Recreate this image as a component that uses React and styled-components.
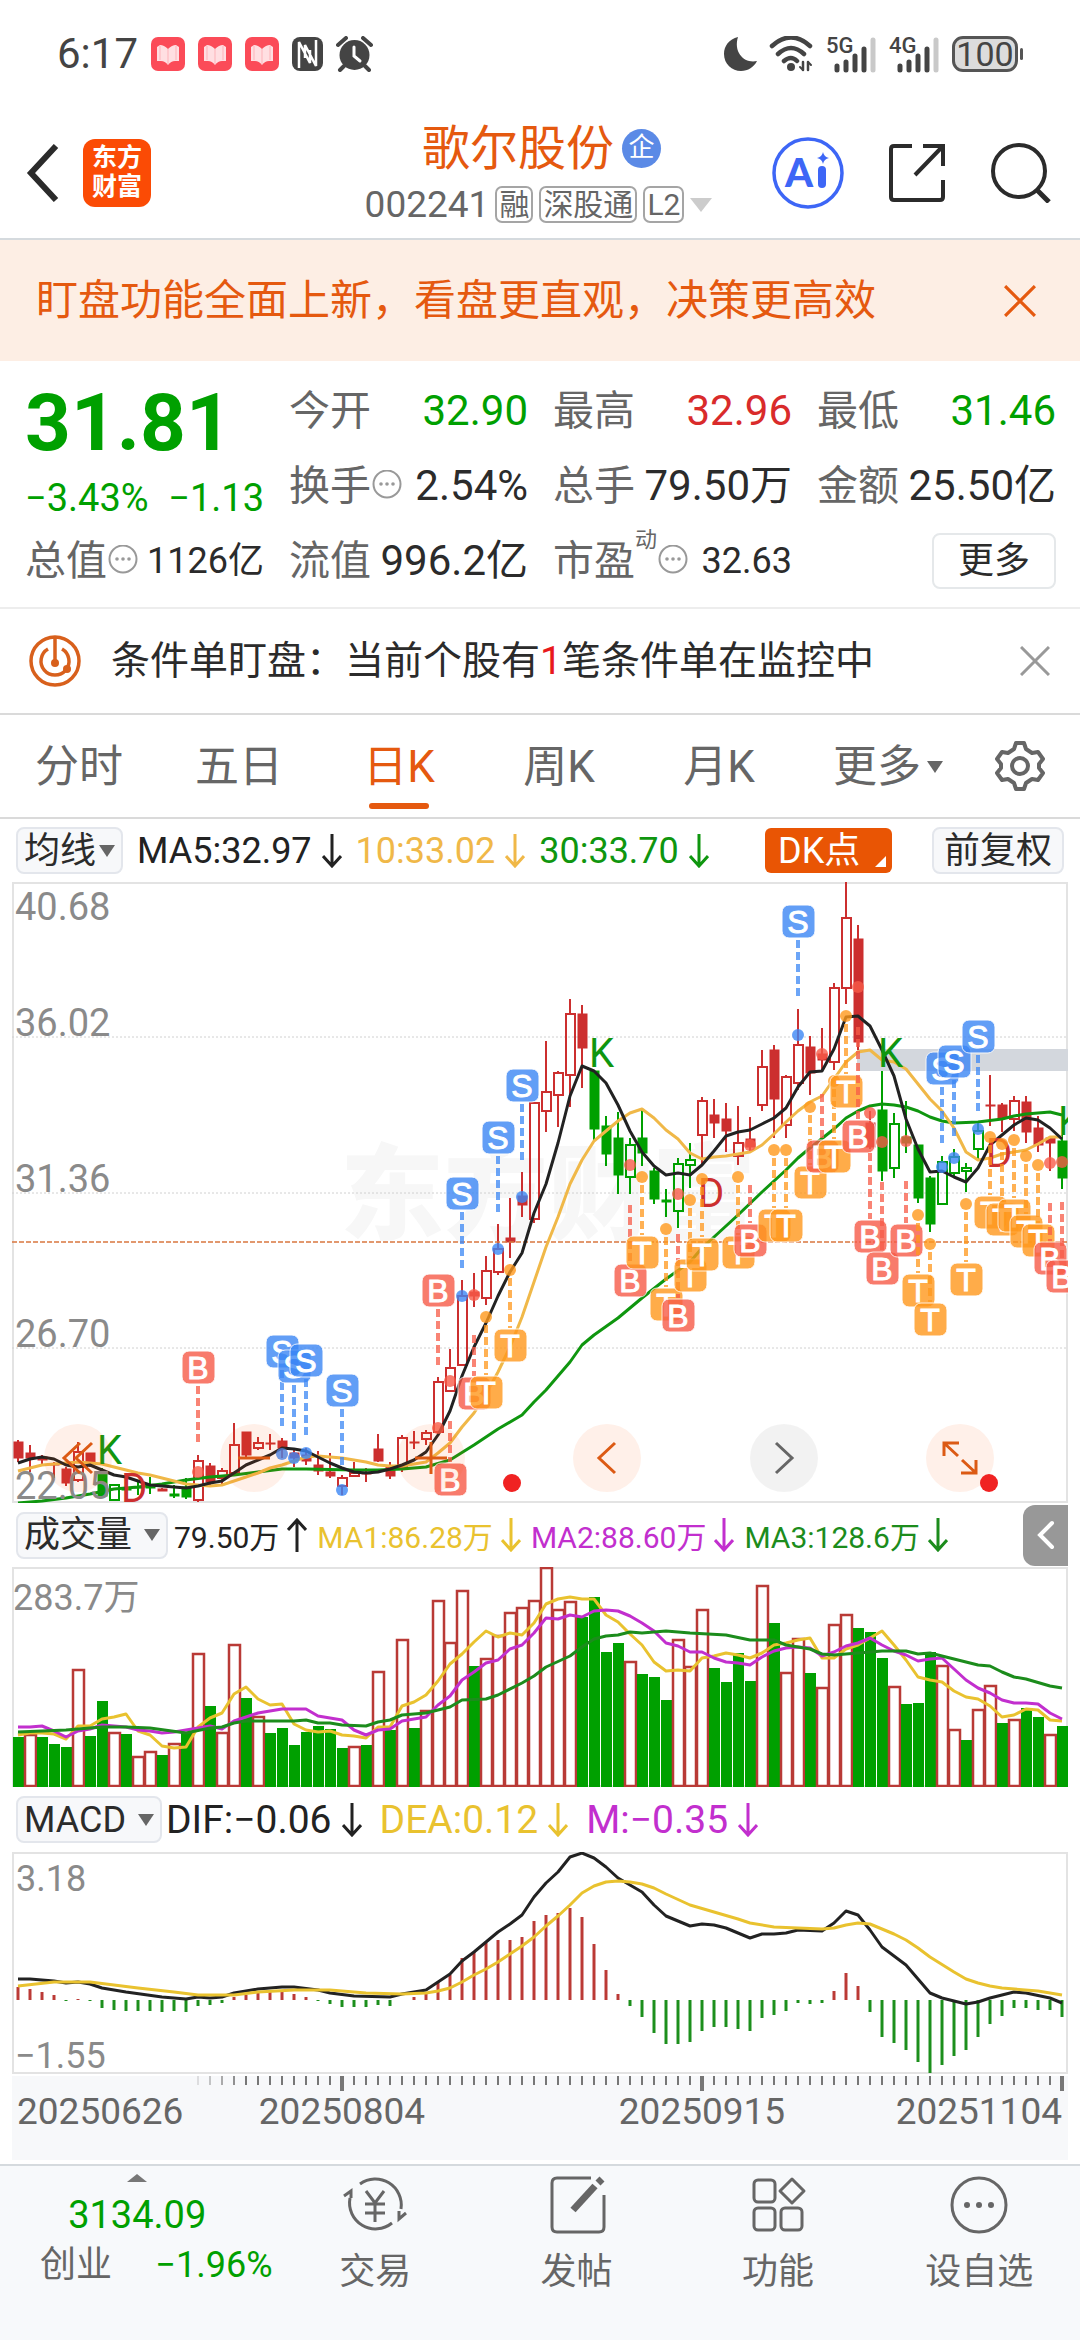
import React from "react";
import styled, { createGlobalStyle } from "styled-components";

const GlobalStyle = createGlobalStyle`
  * {
    box-sizing: border-box;
  }
  body {
    margin: 0;
    background: #fff;
    color: #2b2b2b;
    font-family: Roboto, "Noto Sans CJK SC", sans-serif;
  }
  button, select {
    font-family: inherit;
    color: inherit;
    margin: 0;
    padding: 0;
    border: none;
    background: none;
    cursor: pointer;
  }
  svg {
    display: block;
    flex: none;
  }
`;

const ORANGE = "#e5590f";
const RED = "#cc2f2f";
const GREEN = "#00a000";
const YELLOW = "#e9c22f";
const PURPLE = "#c22fce";

const Page = styled.div`
  width: 100%;
  display: flex;
  flex-direction: column;
`;

/* ---------- status bar ---------- */
const StatusBar = styled.div`
  height: 107px;
  padding: 0 62px 0 57px;
  display: flex;
  align-items: center;
  justify-content: space-between;
  color: #444;
`;
const StatusGroup = styled.div`
  display: flex;
  align-items: center;
  gap: ${(p) => p.$gap || 12}px;
`;
const Time = styled.span`
  font-size: 42px;
  line-height: 48px;
`;
const Battery = styled.div`
  position: relative;
  width: 66px;
  height: 36px;
  border: 3px solid #555;
  border-radius: 11px;
  background: #dcdcdc;
  font-size: 34px;
  line-height: 31px;
  text-align: center;
  &::after {
    content: "";
    position: absolute;
    right: -8px;
    top: 9px;
    width: 3px;
    height: 12px;
    border-radius: 2px;
    background: #555;
  }
`;

/* ---------- header ---------- */
const Header = styled.header`
  height: 133px;
  border-bottom: 2px solid #d5dade;
  padding: 0 29px 0 26px;
  display: grid;
  grid-template-columns: 1fr auto 1fr;
  align-items: center;
`;
const HeaderSide = styled.div`
  display: flex;
  align-items: center;
  justify-content: ${(p) => (p.$end ? "flex-end" : "flex-start")};
  gap: ${(p) => (p.$end ? "44px" : "24px")};
`;
const IconButton = styled.button`
  display: flex;
  align-items: center;
  justify-content: center;
`;
const Logo = styled.div`
  width: 68px;
  height: 68px;
  border-radius: 12px;
  background: #fb4b05;
  color: #fff;
  font-size: 25px;
  line-height: 29px;
  font-weight: 700;
  text-align: center;
  padding-top: 4px;
`;
const HeaderCenter = styled.div`
  display: flex;
  flex-direction: column;
  align-items: center;
  padding-top: 6px;
`;
const TitleRow = styled.div`
  display: flex;
  align-items: center;
  gap: 8px;
  padding-left: 6px;
`;
const Title = styled.h1`
  margin: 0;
  font-size: 48px;
  line-height: 58px;
  font-weight: 400;
  color: ${ORANGE};
`;
const Corp = styled.span`
  width: 39px;
  height: 39px;
  border-radius: 50%;
  background: #5b8ae6;
  color: #fff;
  font-size: 26px;
  line-height: 37px;
  text-align: center;
`;
const CodeRow = styled.div`
  display: flex;
  align-items: center;
  gap: 6px;
  height: 54px;
  color: #666;
`;
const Code = styled.span`
  font-size: 37px;
  line-height: 40px;
`;
const Tag = styled.span`
  border: 2px solid #a5a5a5;
  border-radius: 7px;
  padding: 0 2px;
  height: 37px;
  font-size: 30px;
  line-height: 33px;
`;
const Triangle = styled.i`
  width: 0;
  height: 0;
  border: ${(p) => p.$w || 8}px solid transparent;
  border-bottom-width: 0;
  border-top: ${(p) => p.$h || 12}px solid ${(p) => p.$color || "#666"};
`;

/* ---------- notices ---------- */
const Banner = styled.section`
  height: 121px;
  padding: 0 44px 0 36px;
  display: flex;
  align-items: center;
  justify-content: space-between;
  background: #fdeee4;
  color: ${ORANGE};
  font-size: 42px;
  line-height: 60px;
`;
const Watch = styled.section`
  height: 106px;
  border-bottom: 2px solid #dadada;
  padding: 0 30px 0 28px;
  display: flex;
  align-items: center;
  gap: 29px;
  font-size: 39px;
  line-height: 56px;
  p {
    flex: 1;
    margin: 0;
  }
  b {
    font-weight: 400;
    color: #e8191c;
  }
`;

/* ---------- quote ---------- */
const Quote = styled.section`
  height: 248px;
  border-bottom: 2px solid #ededed;
  padding: 12px 24px 0 25px;
  display: grid;
  grid-template-columns: repeat(4, 1fr);
  grid-template-rows: repeat(3, 75px);
  column-gap: 25px;
`;
const PriceCell = styled.div`
  grid-row: span 2;
  color: ${GREEN};
`;
const Price = styled.div`
  font-size: 80px;
  line-height: 100px;
  font-weight: 700;
`;
const Change = styled.div`
  display: flex;
  justify-content: space-between;
  font-size: 38px;
  line-height: 50px;
`;
const Cell = styled.div`
  display: flex;
  align-items: center;
  white-space: nowrap;
  line-height: 50px;
`;
const Label = styled.span`
  font-size: 41px;
  color: #666;
`;
const Sup = styled.sup`
  align-self: flex-start;
  font-size: 22px;
  line-height: 34px;
  color: #666;
`;
const Value = styled.span`
  margin-left: auto;
  font-size: ${(p) => (p.$small ? 36 : 42)}px;
  color: ${(p) => p.$color || "#2b2b2b"};
`;
const MoreButton = styled.button`
  margin-left: auto;
  width: 124px;
  height: 56px;
  border: 2px solid #e5e8ea;
  border-radius: 8px;
  font-size: 36px;
  line-height: 48px;
`;

/* ---------- period tabs ---------- */
const Tabs = styled.nav`
  height: 104px;
  border-bottom: 2px solid #dadada;
  display: grid;
  grid-template-columns: repeat(6, 160fr) 120fr;
`;
const Tab = styled.button`
  display: flex;
  flex-direction: column;
  align-items: center;
  justify-content: flex-end;
  font-size: 44px;
  line-height: 60px;
  color: ${(p) => (p.$active ? ORANGE : "#666")};
  padding: 0 2px 8px 0;
  &::after {
    content: "";
    width: 60px;
    height: 6px;
    margin-top: 6px;
    border-radius: 3px;
    background: ${(p) => (p.$active ? ORANGE : "transparent")};
  }
`;
const TabLabel = styled.span`
  display: flex;
  align-items: center;
  gap: 6px;
  padding-left: 18px;
`;

/* ---------- chart toolbars ---------- */
const Toolbar = styled.div`
  height: ${(p) => p.$height || 64}px;
  padding: 0 12px 0 16px;
  display: flex;
  align-items: center;
  white-space: nowrap;
  font-size: ${(p) => p.$size || 36}px;
`;
const Drop = styled.label`
  height: 47px;
  border: 2px solid #e3e6ec;
  border-radius: 8px;
  background: #f7f8fa;
  padding: 0 6px;
  display: flex;
  align-items: center;
  gap: ${(p) => (p.$tight ? 2 : 11)}px;
`;
const Select = styled.select`
  appearance: none;
  font-size: 36px;
  line-height: 42px;
  outline: none;
`;
const Readout = styled.span`
  margin-left: ${(p) => p.$gap || 14}px;
  display: flex;
  align-items: center;
  gap: ${(p) => p.$inner || 10}px;
  color: ${(p) => p.$color || "#222"};
`;
const DkButton = styled.button`
  position: relative;
  margin-left: auto;
  width: 127px;
  height: 45px;
  border-radius: 6px;
  background: #e95504;
  color: #fff;
  font-size: 36px;
  line-height: 42px;
  text-align: left;
  padding-left: 13px;
  &::after {
    content: "";
    position: absolute;
    right: 6px;
    bottom: 6px;
    border-left: 11px solid transparent;
    border-bottom: 11px solid #fff;
  }
`;
const AdjustButton = styled.button`
  margin: 0 4px 0 40px;
  width: 132px;
  height: 47px;
  border: 2px solid #e3e6ec;
  border-radius: 8px;
  background: #f7f8fa;
  font-size: 36px;
  line-height: 42px;
`;
const Handle = styled.button`
  margin-left: auto;
  width: 45px;
  height: 61px;
  border-radius: 12px 0 0 12px;
  background: #989898;
  display: flex;
  align-items: center;
  justify-content: center;
`;

/* ---------- charts ---------- */
const Plot = styled.div`
  position: relative;
  margin: 0 12px;
  box-shadow: inset 0 0 0 2px #e3e3e3;
  svg.plot {
    width: 100%;
    height: auto;
  }
`;
const AxisText = styled.text`
  font-size: ${(p) => p.$size || 36}px;
  fill: #8a8a8a;
`;
const Watermark = styled.text`
  font-size: 104px;
  font-weight: 900;
  fill: #f7f7f7;
`;
const Signal = styled.text`
  font-size: 40px;
  fill: ${(p) => p.$color};
`;
const MarkText = styled.text`
  font-family: "Liberation Sans", sans-serif;
  font-size: 32px;
  fill: #fff;
  stroke: #fff;
  text-anchor: middle;
`;
const Controls = styled.div`
  position: absolute;
  left: 3%;
  right: 7%;
  bottom: 11px;
  display: flex;
  justify-content: space-between;
`;
const Round = styled.button`
  position: relative;
  width: 68px;
  height: 68px;
  border-radius: 50%;
  background: ${(p) => (p.$grey ? "rgba(0, 0, 0, 0.05)" : "rgba(250, 90, 10, 0.09)")};
  display: flex;
  align-items: center;
  justify-content: center;
`;
const RedDot = styled.i`
  position: absolute;
  right: ${(p) => (p.$far ? -56 : -4)}px;
  bottom: 0;
  width: 18px;
  height: 18px;
  border-radius: 50%;
  background: #f02222;
`;
const Dates = styled.div`
  margin: 2px 12px 4px;
  background: #f7f8fa;
  svg {
    width: 100%;
    height: auto;
  }
`;
const DateText = styled.text`
  font-size: 37px;
  fill: #666;
  text-anchor: ${(p) => p.$anchor};
`;

/* ---------- bottom bar ---------- */
const BottomBar = styled.footer`
  height: 176px;
  border-top: 2px solid #d5dade;
  background: #f7f9fb;
  display: grid;
  grid-template-columns: 274fr repeat(4, 201fr);
`;
const IndexBox = styled.button`
  display: flex;
  flex-direction: column;
  align-items: center;
  padding-top: 8px;
  color: ${GREEN};
  font-size: 38px;
  line-height: 50px;
  i {
    transform: rotate(180deg);
    margin-bottom: 8px;
  }
`;
const IndexRow = styled.span`
  width: 100%;
  padding: 0 2px 0 40px;
  display: flex;
  justify-content: space-between;
  font-size: 36px;
`;
const IndexName = styled.span`
  color: #666;
`;
const NavItem = styled.button`
  display: flex;
  flex-direction: column;
  align-items: center;
  gap: 10px;
  padding-top: 7px;
  font-size: 36px;
  line-height: 50px;
  color: #666;
`;

/* ---------- data ---------- */
// high, body top, body bottom, low, kind (R/G filled, r/g hollow)
const candles = [
  [558, 560, 576, 580, "R"], [563, 571, 576, 590, "R"], [573, 575, 578, 583, "R"], [580, 582, 583, 596, "R"],
  [585, 587, 601, 604, "R"], [560, 570, 598, 600, "r"], [571, 571, 580, 585, "R"], [586, 590, 614, 614, "G"],
  [602, 603, 618, 619, "g"], [601, 607, 608, 611, "G"], [600, 605, 606, 613, "G"], [595, 605, 606, 612, "G"],
  [606, 607, 609, 609, "R"], [603, 612, 614, 616, "G"], [596, 605, 615, 617, "G"], [573, 579, 618, 620, "r"],
  [581, 584, 600, 603, "R"], [586, 589, 596, 603, "r"], [541, 563, 591, 592, "r"], [550, 550, 573, 575, "R"],
  [555, 561, 566, 568, "r"], [552, 561, 562, 568, "R"], [556, 559, 566, 576, "R"], [568, 571, 576, 585, "R"],
  [566, 573, 579, 583, "R"], [569, 583, 589, 593, "R"], [571, 590, 594, 596, "R"], [593, 596, 604, 613, "r"],
  [580, 591, 594, 595, "r"], [586, 591, 592, 600, "R"], [552, 567, 579, 580, "R"], [580, 585, 594, 597, "R"],
  [553, 556, 586, 590, "r"], [549, 560, 561, 567, "R"], [548, 551, 557, 563, "r"], [495, 500, 550, 553, "r"],
  [467, 486, 509, 510, "r"], [398, 414, 483, 484, "r"], [391, 410, 414, 425, "R"], [374, 389, 416, 423, "r"],
  [342, 367, 390, 393, "r"], [316, 356, 360, 376, "R"], [290, 314, 323, 335, "R"], [220, 221, 337, 341, "r"],
  [159, 210, 229, 250, "r"], [189, 191, 213, 245, "r"], [117, 132, 193, 225, "r"], [123, 132, 166, 206, "R"],
  [188, 189, 247, 259, "G"], [234, 244, 272, 284, "G"], [230, 256, 293, 312, "G"], [256, 263, 295, 312, "g"],
  [227, 256, 271, 284, "G"], [286, 289, 317, 322, "G"], [307, 318, 320, 335, "G"], [276, 282, 329, 346, "g"],
  [261, 278, 283, 306, "g"], [215, 219, 253, 282, "r"], [217, 233, 241, 256, "R"], [221, 237, 249, 270, "R"],
  [224, 261, 274, 283, "r"], [235, 257, 265, 270, "R"], [168, 185, 223, 229, "r"], [163, 168, 217, 256, "R"],
  [193, 195, 243, 256, "r"], [127, 163, 201, 208, "r"], [154, 165, 191, 213, "R"], [146, 172, 178, 188, "R"],
  [101, 106, 180, 188, "r"], [0, 36, 106, 122, "r"], [43, 57, 160, 168, "R"], [229, 241, 265, 267, "R"],
  [189, 228, 289, 299, "G"], [231, 242, 286, 296, "g"], [219, 255, 261, 271, "G"], [263, 263, 316, 321, "G"],
  [294, 296, 342, 350, "G"], [274, 280, 322, 322, "g"], [267, 275, 291, 295, "g"], [281, 286, 289, 310, "g"],
  [241, 249, 267, 279, "g"], [193, 223, 224, 244, "R"], [221, 223, 236, 250, "R"], [214, 219, 237, 249, "r"],
  [214, 220, 250, 261, "R"], [234, 246, 263, 270, "R"], [255, 256, 261, 289, "R"], [253, 259, 296, 307, "G"],
];

const ma5 = [
  581, 577, 575, 577, 583, 585, 583, 588, 593, 595, 599, 603, 604, 605, 606, 604, 601, 599, 591, 583, 578, 573,
  566, 567, 569, 575, 581, 586, 590, 591, 590, 587, 583, 578, 570, 553, 529, 494, 465, 441, 414, 390, 371, 331,
  302, 261, 214, 184, 189, 201, 223, 249, 270, 284, 293, 291, 293, 283, 269, 254, 250, 248, 242, 236, 226, 205,
  190, 189, 167, 135, 134, 144, 168, 194, 237, 267, 290, 289, 295, 300, 286, 263, 253, 243, 236, 238, 246, 257,
];
const ma10 = [
  589, 586, 583, 582, 581, 580, 581, 582, 585, 588, 591, 593, 596, 599, 602, 603, 604, 603, 599, 595, 591, 586,
  583, 579, 575, 574, 575, 576, 578, 580, 583, 584, 584, 582, 580, 571, 561, 545, 531, 512, 490, 465, 435, 400,
  365, 335, 302, 278, 259, 249, 239, 231, 227, 236, 248, 257, 271, 277, 275, 274, 272, 270, 263, 252, 240, 229,
  220, 214, 197, 180, 170, 168, 178, 180, 187, 202, 217, 229, 246, 270, 278, 276, 272, 270, 268, 262, 255, 255,
];
const ma30 = [
  [0, 621], [2, 619], [4, 616], [6, 612], [8, 607], [10, 605], [12, 602], [14, 598], [16, 595], [18, 593],
  [20, 590], [22, 587], [24, 587], [28, 588], [30, 588], [32, 587], [34, 585], [36, 578], [38, 563], [40, 547],
  [42, 533], [43, 520], [44, 508], [45, 494], [46, 480], [47, 463], [48, 453], [50, 436], [52, 416], [54, 397],
  [56, 380], [57, 366], [58, 355], [60, 333], [62, 310], [64, 288], [65, 276], [66, 266], [68, 247], [69, 236],
  [70, 229], [71, 224], [72, 222], [73, 223], [74, 225], [75, 229], [76, 235], [77, 239], [78, 241], [80, 240],
  [82, 237], [83, 234], [84, 232], [86, 230], [87, 233],
];

// slot, letter, dot y, badge y
const marks = [
  [15, "B", 590, 485], [22, "S", 572, 469], [23, "S", 576, 484], [24, "S", 571, 478], [27, "S", 608, 508],
  [35, "B", 546, 408], [36, "B", 499, 597], [37, "S", 414, 311], [38, "B", 413, 511], [39, "T", 435, 510],
  [40, "S", 367, 255], [41, "T", 388, 463], [42, "S", 315, 203], [51, "B", 283, 398], [52, "T", 295, 370],
  [54, "T", 347, 422], [55, "B", 312, 433], [56, "T", 318, 393], [57, "T", 297, 372], [60, "T", 295, 370],
  [61, "B", 263, 358], [63, "T", 268, 343], [64, "T", 268, 343], [65, "S", 153, 39], [66, "T", 225, 300],
  [67, "B", 172, 274], [68, "T", 199, 274], [69, "T", 134, 209], [70, "B", 105, 254], [71, "B", 231, 354],
  [72, "B", 260, 386], [74, "B", 259, 358], [75, "T", 333, 408], [76, "T", 362, 437], [77, "S", 285, 186],
  [78, "S", 276, 179], [79, "T", 322, 397], [80, "S", 247, 154], [81, "T", 255, 330], [82, "T", 262, 337],
  [83, "T", 258, 333], [84, "T", 274, 349], [85, "T", 283, 358], [86, "B", 281, 376], [87, "B", 280, 394],
];
const markColors = { B: "#f75b48", S: "#3c87f5", T: "#ff981c" };

const volume = [
  170, 167, 170, 177, 180, 102, 169, 134, 165, 167, 189, 184, 188, 176, 166, 86, 139, 165, 77, 131, 149, 166,
  161, 178, 165, 159, 162, 181, 179, 178, 104, 163, 72, 161, 143, 33, 75, 23, 99, 91, 68, 45, 40, 33,
  0, 42, 34, 50, 30, 85, 76, 94, 107, 110, 133, 72, 99, 42, 101, 115, 86, 114, 18, 56, 105, 71,
  106, 120, 57, 47, 61, 65, 91, 119, 137, 136, 85, 98, 162, 173, 142, 118, 156, 152, 141, 150, 167, 159,
];
const volumeKinds =
  "GrGGGrGGrGrrGrGrGrrGrGGGGGGGrGrGrGrrrrGrrrrrrrrGGGGrGGGrrrGGGGrGrrGrrrGGGrGGGrrGrrGrGGrG";
const volMa1 = [
  168, 166, 166, 167, 172, 159, 159, 152, 150, 147, 164, 168, 179, 181, 180, 160, 151, 146, 127, 120, 132, 138,
  137, 157, 163, 165, 164, 168, 169, 171, 160, 160, 139, 135, 128, 114, 97, 87, 75, 64, 70, 66, 68, 56,
  37, 32, 30, 32, 32, 48, 55, 67, 78, 95, 104, 103, 104, 91, 89, 86, 88, 91, 86, 78, 76, 73,
  71, 91, 91, 82, 78, 71, 64, 78, 93, 110, 113, 115, 124, 130, 132, 139, 150, 148, 142, 143, 153, 154,
];
const volMa2 = [
  160, 160, 159, 164, 170, 164, 162, 158, 159, 160, 163, 164, 166, 165, 163, 161, 159, 162, 154, 150, 146, 144,
  142, 142, 142, 149, 151, 153, 163, 168, 163, 162, 154, 152, 150, 138, 129, 113, 105, 96, 93, 82, 78, 66,
  51, 52, 48, 50, 44, 43, 44, 49, 56, 64, 76, 79, 85, 85, 91, 95, 96, 98, 90, 84, 81, 80,
  81, 89, 85, 79, 76, 71, 78, 84, 88, 94, 92, 91, 102, 113, 121, 126, 133, 136, 136, 137, 146, 152,
];
const volMa3 = [
  [0, 165], [4, 163], [7, 160], [9, 160], [11, 161], [14, 166], [16, 161], [17, 160], [18, 156], [19, 154],
  [23, 154], [24, 153], [25, 156], [26, 156], [27, 158], [29, 159], [30, 155], [31, 153], [32, 148], [34, 146],
  [36, 140], [37, 133], [39, 132], [40, 128], [42, 116], [43, 109], [44, 100], [46, 89], [47, 80], [48, 72],
  [49, 69], [50, 68], [51, 65], [52, 66], [54, 64], [56, 66], [59, 68], [61, 73], [63, 73], [64, 78],
  [66, 82], [67, 87], [68, 88], [70, 86], [72, 84], [74, 84], [75, 87], [76, 86], [80, 98], [81, 99],
  [82, 105], [83, 110], [84, 112], [86, 119], [87, 121],
];

const macdBars = [
  13, 11, 8, 5, -1, 1, -1, -8, -10, -11, -11, -11, -12, -11, -12, -6, -5, -3, 3, 5, 8, 9,
  8, 6, 3, -1, -4, -7, -7, -7, -5, -6, 0, 3, 6, 18, 25, 42, 48, 57, 60, 60, 63, 79,
  85, 87, 92, 83, 56, 30, 6, -6, -17, -33, -44, -44, -42, -31, -27, -27, -29, -31, -18, -15, -11, -3,
  -4, -3, 9, 27, 14, -12, -37, -43, -50, -62, -73, -65, -56, -50, -37, -24, -16, -8, -8, -10, -10, -17,
];
const dif = [
  [0, 127], [1, 127], [3, 129], [4, 131], [5, 130], [6, 132], [7, 136], [9, 140], [12, 145], [14, 147],
  [15, 145], [16, 146], [17, 145], [18, 141], [19, 139], [20, 137], [22, 135], [23, 135], [25, 138], [26, 141],
  [28, 144], [31, 145], [32, 142], [34, 138], [35, 130], [36, 122], [37, 109], [38, 100], [39, 90], [40, 80],
  [41, 72], [42, 63], [43, 45], [44, 31], [45, 20], [46, 5], [47, 1], [48, 6], [49, 15], [50, 26],
  [51, 33], [52, 40], [53, 53], [54, 64], [56, 74], [57, 72], [58, 73], [59, 76], [61, 86], [62, 82],
  [63, 82], [64, 81], [65, 78], [67, 79], [68, 71], [69, 59], [70, 63], [71, 78], [72, 95], [74, 113],
  [76, 141], [77, 146], [79, 152], [80, 150], [81, 146], [83, 140], [84, 141], [86, 146], [87, 151],
];
const dea = [
  [0, 134], [3, 130], [6, 130], [8, 133], [10, 136], [13, 140], [15, 143], [18, 143], [20, 140], [23, 138],
  [26, 138], [29, 141], [32, 142], [34, 141], [35, 139], [36, 136], [37, 130], [38, 123], [39, 117], [40, 110],
  [41, 102], [42, 94], [43, 85], [44, 74], [45, 64], [46, 53], [47, 41], [48, 34], [49, 30], [50, 29],
  [51, 30], [52, 32], [53, 36], [54, 42], [56, 53], [58, 60], [60, 67], [61, 71], [63, 75], [65, 76],
  [67, 77], [68, 76], [69, 73], [70, 71], [71, 72], [72, 77], [73, 82], [74, 88], [75, 96], [76, 105],
  [78, 120], [79, 127], [80, 131], [81, 134], [82, 136], [85, 139], [87, 143],
];

const slotX = (i) => 6 + i * 12;

function Line({ data, color }) {
  const points = data
    .map((d, i) => (Array.isArray(d) ? `${slotX(d[0])},${d[1]}` : `${slotX(i)},${d}`))
    .join(" ");
  return <polyline points={points} fill="none" stroke={color} strokeWidth="3" strokeLinejoin="round" />;
}

function Candle({ x, data }) {
  const [hi, top, bottom, lo, kind] = data;
  const color = kind.toUpperCase() === "R" ? RED : GREEN;
  const hollow = kind === kind.toLowerCase();
  return (
    <g stroke={color} strokeWidth="2">
      <path d={`M${x} ${hi}V${top}M${x} ${bottom}V${lo}`} />
      <rect
        x={x - 4}
        y={top}
        width="9"
        height={Math.max(bottom - top, 1)}
        fill={hollow ? "none" : color}
        strokeWidth={hollow ? 2 : 1}
      />
    </g>
  );
}

function Mark({ x, letter, dot, y }) {
  const color = markColors[letter];
  const above = y < dot;
  let from = above ? y + 19 : dot + 40;
  let to = above ? y + 76 : y - 17;
  if (letter === "T") from = dot + 8;
  return (
    <g>
      <path d={`M${x} ${from}V${to}`} stroke={color} strokeWidth="4" strokeDasharray="8 4" opacity="0.75" />
      <circle cx={x} cy={dot} r="6" fill={color} opacity="0.8" />
      <rect x={x - 16} y={y - 16} width="33" height="33" rx="7" fill={color} stroke="#fff" strokeWidth="1" opacity="0.8" />
      <MarkText x={x} y={y + 12}>{letter}</MarkText>
    </g>
  );
}

function PriceChart() {
  return (
    <svg className="plot" viewBox="0 0 1056 621">
      <Watermark x="328" y="350">东方财富</Watermark>
      {[155, 311, 466].map((y) => (
        <path key={y} d={`M0 ${y}H1056`} stroke="#d0d0d0" strokeDasharray="2 2" />
      ))}
      <rect x="845" y="167" width="211" height="22" fill="#d3d7dd" />
      {candles.map((c, i) => (
        <Candle key={i} x={slotX(i)} data={c} />
      ))}
      <path d="M0 360H1056" stroke="#d9773f" strokeWidth="1.5" strokeDasharray="5 2" />
      <Line data={ma30} color="#0f960f" />
      <Line data={ma10} color="#f0b848" />
      <Line data={ma5} color="#222" />
      <Signal x="85" y="582" $color="#0f960f">K</Signal>
      <Signal x="109" y="620" $color="#cc2f2f">D</Signal>
      <Signal x="577" y="185" $color="#0f960f">K</Signal>
      <Signal x="686" y="325" $color="#cc2f2f">D</Signal>
      <Signal x="866" y="185" $color="#0f960f">K</Signal>
      <Signal x="974" y="285" $color="#cc2f2f">D</Signal>
      <Signal x="1046" y="253" $color="#0f960f">K</Signal>
      {marks.map(([slot, letter, dot, y]) => (
        <Mark key={slot} x={slotX(slot)} letter={letter} dot={dot} y={y} />
      ))}
      <AxisText x="3" y="38" $size={38}>40.68</AxisText>
      <AxisText x="3" y="154" $size={38}>36.02</AxisText>
      <AxisText x="3" y="310" $size={38}>31.36</AxisText>
      <AxisText x="3" y="465" $size={38}>26.70</AxisText>
      <AxisText x="3" y="617" $size={38}>22.05</AxisText>
    </svg>
  );
}

function VolumeChart() {
  return (
    <svg className="plot" viewBox="0 0 1056 220">
      {volume.map((top, i) =>
        volumeKinds[i] === "G" ? (
          <rect key={i} x={i * 12 + 1} y={top} width="11" height={220 - top} fill={GREEN} />
        ) : (
          <rect key={i} x={i * 12 + 1} y={top + 1} width="11" height={218 - top} fill="#fff" stroke="#b93a36" strokeWidth="2.5" />
        )
      )}
      <Line data={volMa1} color={YELLOW} />
      <Line data={volMa2} color={PURPLE} />
      <Line data={volMa3} color="#1c8c1c" />
      <AxisText x="1" y="43">283.7万</AxisText>
    </svg>
  );
}

function MacdChart() {
  return (
    <svg className="plot" viewBox="0 0 1056 222">
      {macdBars.map((v, i) => (
        <path key={i} d={`M${slotX(i)} 148V${148 - v}`} stroke={v > 0 ? "#bb3a36" : "#1c8f1c"} strokeWidth="3" />
      ))}
      <Line data={dif} color="#222" />
      <Line data={dea} color={YELLOW} />
      <AxisText x="4" y="39">3.18</AxisText>
      <AxisText x="3" y="216">−1.55</AxisText>
    </svg>
  );
}

function DateAxis() {
  return (
    <svg viewBox="0 0 1056 84">
      {candles.map((_, i) => {
        if (i < 15) return null;
        const major = i % 30 === 27;
        return (
          <path
            key={i}
            d={`M${slotX(i)} 0V${major ? 15 : 9}`}
            stroke="#777"
            strokeWidth={major ? 4 : 2}
            opacity={Math.min(1, (i - 14) / 5)}
          />
        );
      })}
      <DateText x="5" y="48" $anchor="start">20250626</DateText>
      <DateText x="330" y="48" $anchor="middle">20250804</DateText>
      <DateText x="690" y="48" $anchor="middle">20250915</DateText>
      <DateText x="1050" y="48" $anchor="end">20251104</DateText>
    </svg>
  );
}

/* ---------- icons ---------- */
const Arrow = ({ up }) => (
  <svg width="20" height="34" viewBox="0 0 20 34" fill="none" stroke="currentColor" strokeWidth="3">
    <path d={up ? "M10 34V2M1 12l9-10l9 10" : "M10 0v32M1 22l9 10l9-10"} />
  </svg>
);
const Book = () => (
  <svg width="34" height="34" viewBox="0 0 34 34">
    <rect width="34" height="34" rx="7" fill="#fb4b58" />
    <path d="M6 10l3-2q4 0 8 4q4-4 8-4l3 2v14h-4q-4 0-7 4q-3-4-7-4H6z" fill="#ffdfe2" />
    <path d="M9 9v14M25 9v14M17 12v15" stroke="#fdb3b9" />
  </svg>
);
const Nfc = () => (
  <svg width="31" height="34" viewBox="0 0 31 34">
    <rect width="31" height="34" rx="8" fill="#444" />
    <path d="M7 31V5l11 21V13M24 3v26L13 8v13" fill="none" stroke="#fff" strokeWidth="2.500" />
  </svg>
);
const Alarm = () => (
  <svg width="37" height="36" viewBox="0 0 37 36">
    <circle cx="18.500" cy="19" r="15" fill="#444" />
    <path d="M2 9l8-7M35 9l-8-7M8 30l-4 4M29 30l4 4" stroke="#444" strokeWidth="4" strokeLinecap="round" />
    <path d="M18 11v9l6 5" fill="none" stroke="#fff" strokeWidth="3" strokeLinecap="round" />
  </svg>
);
const Moon = () => (
  <svg width="33" height="36" viewBox="0 0 33 36">
    <path d="M14 1C5 3 0 10 0 18c0 10 8 17 17 17c7 0 13-4 16-10C21 28 9 17 14 1z" fill="#444" />
  </svg>
);
const Wifi = () => (
  <svg width="45" height="36" viewBox="0 0 45 36" fill="none" stroke="#444" strokeWidth="4.500" strokeLinecap="round">
    <path d="M3 10q19-17 38 0M9 18q13-12 26 0M15 25q7-6 13 0" />
    <circle cx="22" cy="31" r="4" fill="#444" stroke="none" />
    <path d="M34 26v8M39 26v8" strokeWidth="2.500" />
    <path d="M31 31l3 3M42 29l-3-3" strokeWidth="2" />
  </svg>
);
const SignalText = styled.text`
  font-size: 22px;
  font-weight: 500;
  fill: #444;
`;
const Bars = ({ label }) => (
  <svg width="51" height="44" viewBox="0 -6 51 44">
    <SignalText x="0" y="15">{label}</SignalText>
    <g stroke="#444" strokeWidth="5" strokeLinecap="round">
      <path d="M11 28v4M20 24v8M29 18v14M38 11v21" />
      <path d="M47 2v30" stroke="#c9c9c9" />
    </g>
  </svg>
);
const Back = () => (
  <svg width="33" height="58" viewBox="0 0 33 58" fill="none" stroke="#2b2b2b" strokeWidth="6">
    <path d="M30 2L5 29l25 27" />
  </svg>
);
const AiLetters = styled.text`
  font-family: Lato, sans-serif;
  font-size: 40px;
  font-weight: 900;
  fill: #3d66f6;
`;
const Ai = () => (
  <svg width="72" height="72" viewBox="0 0 72 72">
    <circle cx="36" cy="36" r="34" fill="none" stroke="#3d66f6" strokeWidth="3.500" />
    <AiLetters x="13" y="50">A</AiLetters>
    <path d="M50 33v14" stroke="#3d66f6" strokeWidth="8" strokeLinecap="round" />
    <path d="M51 15q1 5 6 6q-5 1-6 6q-1-5-6-6q5-1 6-6z" fill="#3d66f6" />
  </svg>
);
const Share = () => (
  <svg width="59" height="60" viewBox="0 0 59 60" fill="none" stroke="#2b2b2b" strokeWidth="4">
    <path d="M24 3H6q-3 0-3 3v48q0 3 3 3h46q3 0 3-3V37M35 3h20v20M55 3L27 32" />
  </svg>
);
const Search = () => (
  <svg width="60" height="60" viewBox="0 0 60 60" fill="none" stroke="#2b2b2b" strokeWidth="4">
    <circle cx="28" cy="28" r="26" />
    <path d="M46 47l12 12" strokeWidth="5" />
  </svg>
);
const Close = ({ color, size }) => (
  <svg width={size} height={size} viewBox="0 0 30 30" fill="none" stroke={color} strokeWidth="3">
    <path d="M1 1l28 28M29 1L1 29" />
  </svg>
);
const Radar = () => (
  <svg width="54" height="54" viewBox="0 0 54 54" fill="none" stroke="#d8601c" strokeWidth="3.500">
    <circle cx="27" cy="27" r="24" />
    <path d="M20 15a14 14 0 1 0 14 0M27 3v24" />
    <circle cx="27" cy="29" r="4" fill="#d8601c" stroke="none" />
    <circle cx="39" cy="35" r="4" fill="#d8601c" stroke="none" />
  </svg>
);
const Info = () => (
  <svg width="32" height="32" viewBox="0 0 32 32">
    <circle cx="16" cy="14" r="13.500" fill="none" stroke="#999" strokeWidth="2" />
    <g fill="#999">
      <circle cx="10" cy="14" r="1.800" />
      <circle cx="16" cy="14" r="1.800" />
      <circle cx="22" cy="14" r="1.800" />
    </g>
  </svg>
);
const Gear = () => (
  <svg width="52" height="52" viewBox="0 0 52 52" fill="none" stroke="#666" strokeWidth="4" strokeLinejoin="round">
    <path d="M22 3h8l2 6l6 4l6-1l5 7l-4 5v4l4 5l-5 7l-6-1l-6 4l-2 6h-8l-2-6l-6-4l-6 1l-5-7l4-5v-4l-4-5l5-7l6 1l6-4z" />
    <circle cx="26" cy="26" r="8" />
  </svg>
);

const roundIcons = {
  first: "M22 4L6 19l16 15M34 4L18 19l16 15",
  minus: "M4 19h32",
  plus: "M4 19h32M20 3v32",
  prev: "M28 4L12 19l16 15",
  next: "M12 4l16 15l-16 15",
  expand: "M4 17V4h15M4 4l14 13M36 21v13H21M36 34L22 21",
};
function RoundControl({ name, label, grey, children }) {
  return (
    <Round type="button" aria-label={label} $grey={grey}>
      <svg width="40" height="38" viewBox="0 0 40 38" fill="none" stroke={grey ? "#666" : "#dc5a14"} strokeWidth="3">
        <path d={roundIcons[name]} />
      </svg>
      {children}
    </Round>
  );
}

const navIcons = {
  trade: (
    <>
      <path d="M17 11A26 26 0 0 1 58 36M49 50A26 26 0 0 1 7 25" />
      <path d="M1 23l7-5v7M63 40l-7 6v-8" />
      <path d="M23 18l9 12l9-12M32 30v19M22 31h20M22 40h20" />
    </>
  ),
  post: (
    <>
      <path d="M46 5H12q-5 0-5 5v44q0 5 5 5h42q5 0 5-5V22" />
      <path d="M28 37l22-24" strokeWidth="7" />
      <path d="M53 10l4-4" strokeWidth="7" />
    </>
  ),
  apps: (
    <>
      <rect x="8" y="7" width="21" height="22" rx="4" />
      <rect x="8" y="35" width="21" height="22" rx="4" />
      <rect x="35" y="35" width="21" height="22" rx="4" />
      <path d="M46 6l12 12l-12 12l-12-12z" strokeLinejoin="round" />
    </>
  ),
  more: (
    <>
      <circle cx="32" cy="32" r="27" />
      <g fill="#666" stroke="none">
        <circle cx="20" cy="32" r="3" />
        <circle cx="32" cy="32" r="3" />
        <circle cx="44" cy="32" r="3" />
      </g>
    </>
  ),
};
const navItems = [
  ["trade", "交易"],
  ["post", "发帖"],
  ["apps", "功能"],
  ["more", "设自选"],
];

function Dropdown({ name, value, tight }) {
  return (
    <Drop $tight={tight}>
      <Select aria-label={name} defaultValue={value}>
        <option>{value}</option>
      </Select>
      <Triangle />
    </Drop>
  );
}

function App() {
  return (
    <Page>
      <GlobalStyle />
      <StatusBar>
        <StatusGroup $gap={13}>
          <Time>6:17</Time>
          <Book />
          <Book />
          <Book />
          <Nfc />
          <Alarm />
        </StatusGroup>
        <StatusGroup>
          <Moon />
          <Wifi />
          <Bars label="5G" />
          <Bars label="4G" />
          <Battery>100</Battery>
        </StatusGroup>
      </StatusBar>

      <Header>
        <HeaderSide>
          <IconButton type="button" aria-label="返回">
            <Back />
          </IconButton>
          <Logo>
            东方
            <br />
            财富
          </Logo>
        </HeaderSide>
        <HeaderCenter>
          <TitleRow>
            <Title>歌尔股份</Title>
            <Corp>企</Corp>
          </TitleRow>
          <CodeRow>
            <Code>002241</Code>
            <Tag>融</Tag>
            <Tag>深股通</Tag>
            <Tag>L2</Tag>
            <Triangle $w={11} $h={14} $color="#ccc" />
          </CodeRow>
        </HeaderCenter>
        <HeaderSide $end>
          <IconButton type="button" aria-label="AI">
            <Ai />
          </IconButton>
          <IconButton type="button" aria-label="分享">
            <Share />
          </IconButton>
          <IconButton type="button" aria-label="搜索">
            <Search />
          </IconButton>
        </HeaderSide>
      </Header>

      <Banner>
        <span>盯盘功能全面上新，看盘更直观，决策更高效</span>
        <IconButton type="button" aria-label="关闭">
          <Close color={ORANGE} size={32} />
        </IconButton>
      </Banner>

      <Quote>
        <PriceCell>
          <Price>31.81</Price>
          <Change>
            <span>−3.43%</span>
            <span>−1.13</span>
          </Change>
        </PriceCell>
        <Cell>
          <Label>今开</Label>
          <Value $color={GREEN}>32.90</Value>
        </Cell>
        <Cell>
          <Label>最高</Label>
          <Value $color="#d92b2b">32.96</Value>
        </Cell>
        <Cell>
          <Label>最低</Label>
          <Value $color={GREEN}>31.46</Value>
        </Cell>
        <Cell>
          <Label>换手</Label>
          <Info />
          <Value>2.54%</Value>
        </Cell>
        <Cell>
          <Label>总手</Label>
          <Value>79.50万</Value>
        </Cell>
        <Cell>
          <Label>金额</Label>
          <Value>25.50亿</Value>
        </Cell>
        <Cell>
          <Label>总值</Label>
          <Info />
          <Value $small>1126亿</Value>
        </Cell>
        <Cell>
          <Label>流值</Label>
          <Value>996.2亿</Value>
        </Cell>
        <Cell>
          <Label>市盈</Label>
          <Sup>动</Sup>
          <Info />
          <Value $small>32.63</Value>
        </Cell>
        <Cell>
          <MoreButton type="button">更多</MoreButton>
        </Cell>
      </Quote>

      <Watch>
        <Radar />
        <p>
          条件单盯盘：当前个股有<b>1</b>笔条件单在监控中
        </p>
        <IconButton type="button" aria-label="关闭">
          <Close color="#999" size={30} />
        </IconButton>
      </Watch>

      <Tabs>
        {["分时", "五日", "日K", "周K", "月K"].map((name) => (
          <Tab key={name} type="button" $active={name === "日K"}>
            {name}
          </Tab>
        ))}
        <Tab type="button">
          <TabLabel>
            更多
            <Triangle />
          </TabLabel>
        </Tab>
        <IconButton type="button" aria-label="设置">
          <Gear />
        </IconButton>
      </Tabs>

      <Toolbar $height={63}>
        <Dropdown name="主图指标" value="均线" tight />
        <Readout>MA5:32.97<Arrow /></Readout>
        <Readout $color="#f0b848">10:33.02<Arrow /></Readout>
        <Readout $color="#0f960f">30:33.70<Arrow /></Readout>
        <DkButton type="button">DK点</DkButton>
        <AdjustButton type="button">前复权</AdjustButton>
      </Toolbar>
      <Plot>
        <PriceChart />
        <Controls>
          <RoundControl name="first" label="最前" />
          <RoundControl name="minus" label="缩小" />
          <RoundControl name="plus" label="放大">
            <RedDot $far />
          </RoundControl>
          <RoundControl name="prev" label="向左" />
          <RoundControl name="next" label="向右" grey />
          <RoundControl name="expand" label="全屏">
            <RedDot />
          </RoundControl>
        </Controls>
      </Plot>

      <Toolbar $size={30}>
        <Dropdown name="副图指标" value="成交量" />
        <Readout $gap={6} $inner={8}>79.50万<Arrow up /></Readout>
        <Readout $gap={10} $inner={8} $color={YELLOW}>MA1:86.28万<Arrow /></Readout>
        <Readout $gap={10} $inner={8} $color={PURPLE}>MA2:88.60万<Arrow /></Readout>
        <Readout $gap={10} $inner={8} $color="#1c8c1c">MA3:128.6万<Arrow /></Readout>
        <Handle type="button" aria-label="展开">
          <svg width="20" height="30" viewBox="0 0 20 30" fill="none" stroke="#fff" strokeWidth="4" strokeLinecap="round">
            <path d="M16 3L4 15l12 12" />
          </svg>
        </Handle>
      </Toolbar>
      <Plot>
        <VolumeChart />
      </Plot>

      <Toolbar $height={65} $size={39}>
        <Dropdown name="副图指标二" value="MACD" />
        <Readout $gap={4}>DIF:−0.06<Arrow /></Readout>
        <Readout $gap={18} $color={YELLOW}>DEA:0.12<Arrow /></Readout>
        <Readout $gap={18} $color={PURPLE}>M:−0.35<Arrow /></Readout>
      </Toolbar>
      <Plot>
        <MacdChart />
      </Plot>
      <Dates>
        <DateAxis />
      </Dates>

      <BottomBar>
        <IndexBox type="button">
          <Triangle $w={10} $h={8} $color="#777" />
          <span>3134.09</span>
          <IndexRow>
            <IndexName>创业</IndexName>
            <span>−1.96%</span>
          </IndexRow>
        </IndexBox>
        {navItems.map(([icon, label]) => (
          <NavItem key={icon} type="button">
            <svg width="64" height="64" viewBox="0 0 64 64" fill="none" stroke="#666" strokeWidth="3">
              {navIcons[icon]}
            </svg>
            {label}
          </NavItem>
        ))}
      </BottomBar>
    </Page>
  );
}

export default App;
